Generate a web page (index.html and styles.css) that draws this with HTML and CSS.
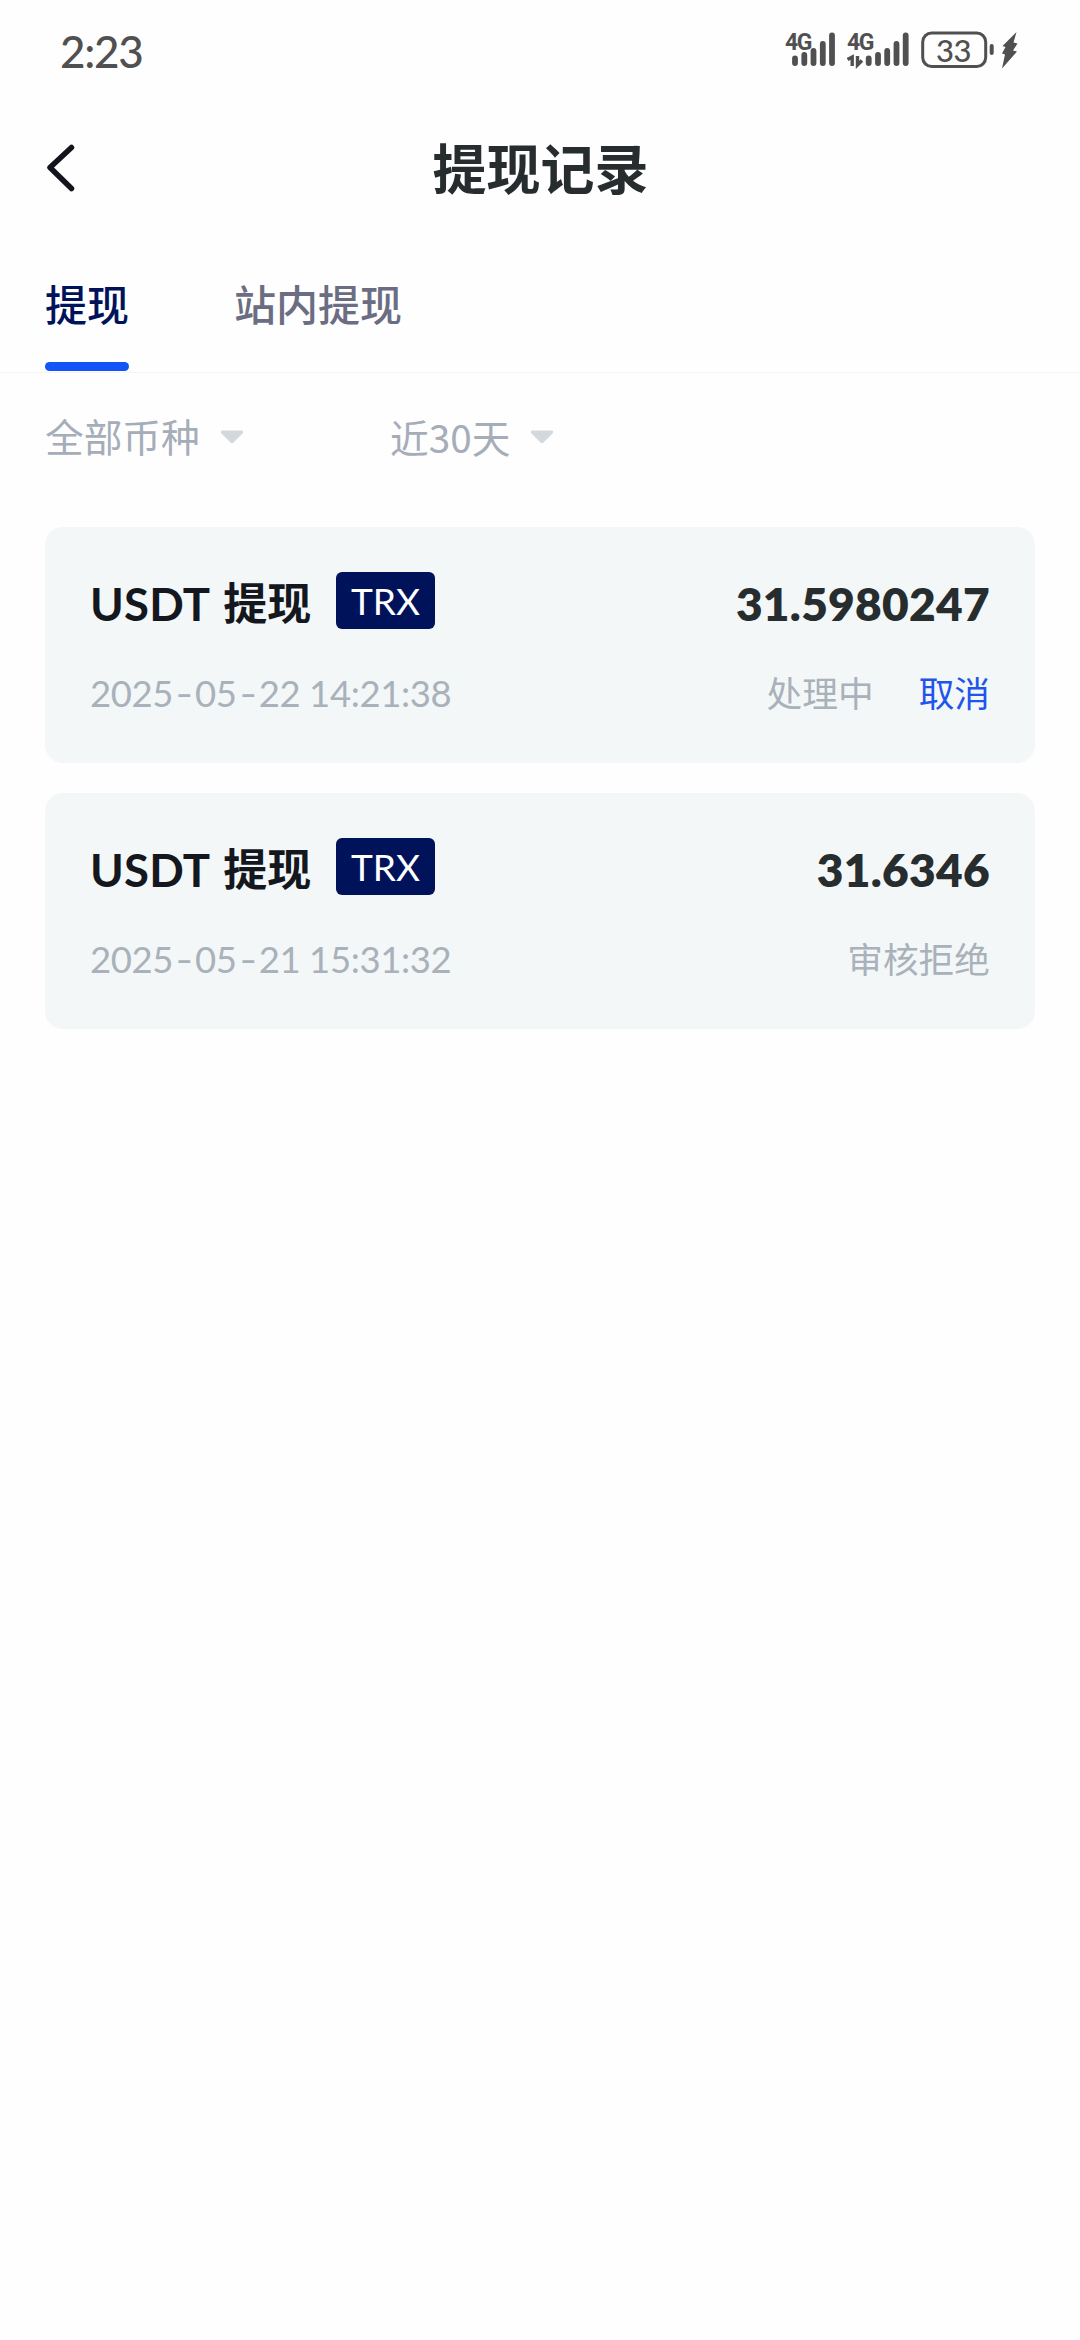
FILE: index.html
```html
<!DOCTYPE html>
<html lang="zh-CN">
<head>
<meta charset="utf-8">
<title>提现记录</title>
<link rel="stylesheet" href="styles.css">
</head>
<body>
<div class="status-bar">
  <span class="clock">2:23</span>
  <svg class="status-icons" width="240" height="44" viewBox="0 0 240 44">
    <g class="signal">
      <text class="network" x="1" y="21">4G</text>
      <path d="M11 29.5V34M20.3 26V34M29.5 22V34M38.8 15V34M48 6.500V34"/>
    </g>
    <g class="signal">
      <text class="network" x="63" y="21">4G</text>
      <path d="M84.700 29.500V34M94 26V34M103.200 22V34M112.500 15V34M121.700 6.500V34"/>
      <path class="arrows" d="M63.500 30.500L68.200 28V37M73.500 27V36L78 31.500"/>
    </g>
    <rect class="battery" x="138.700" y="4" width="63" height="33.500" rx="9"/>
    <text class="level" x="169.500" y="32.500" text-anchor="middle">33</text>
    <rect class="solid" x="205.700" y="15" width="4" height="11" rx="2"/>
    <path class="solid" d="M232.500 3L218.500 17L221.500 18L218 24.500L221 25.500L218 39.500L233 22.500L229 21.500L233.500 14.500L229.500 13.500Z"/>
  </svg>
</div>
<header class="header">
  <svg class="back" width="30" height="50" viewBox="0 0 30 50"><path d="M26.500 4.500L5 24.500L26.500 45.500"/></svg>
  <h1 class="title">提现记录</h1>
</header>
<nav class="tabs">
  <a class="tab tab-active">提现</a>
  <a class="tab">站内提现</a>
</nav>
<div class="filters">
  <div class="filter filter-coin"><span>全部币种</span>
    <svg class="caret" width="26" height="16" viewBox="0 0 26 16"><path d="M3 1.500H23Q25 2.500 23.500 4.500L14.500 13.500Q13 15 11.500 13.500L2.500 4.500Q1 2.500 3 1.500Z"/></svg></div>
  <div class="filter"><span>近<span class="days">30</span>天</span>
    <svg class="caret" width="26" height="16" viewBox="0 0 26 16"><path d="M3 1.500H23Q25 2.500 23.500 4.500L14.500 13.500Q13 15 11.500 13.500L2.500 4.500Q1 2.500 3 1.500Z"/></svg></div>
</div>
<main class="records">
  <article class="card">
    <div class="row row-main">
      <span class="name"><span class="coin">USDT</span><span>提现</span></span>
      <span class="chain">TRX</span>
      <span class="amount">31.5980247</span>
    </div>
    <div class="row row-meta">
      <time class="date">2025<span class="dash">-</span>05<span class="dash">-</span>22 14:21:38</time>
      <span class="state">处理中</span>
      <a class="cancel">取消</a>
    </div>
  </article>
  <article class="card">
    <div class="row row-main">
      <span class="name"><span class="coin">USDT</span><span>提现</span></span>
      <span class="chain">TRX</span>
      <span class="amount">31.6346</span>
    </div>
    <div class="row row-meta">
      <time class="date">2025<span class="dash">-</span>05<span class="dash">-</span>21 15:31:32</time>
      <span class="state">审核拒绝</span>
    </div>
  </article>
</main>
</body>
</html>
```

FILE: styles.css
```css
* { box-sizing: border-box; }
body {
  margin: 0;
  min-height: 2340px;
  background: #fefefe;
  color: #272d2e;
  font-family: Lato, "Noto Sans CJK SC", sans-serif;
}
.status-bar {
  display: flex;
  justify-content: space-between;
  height: 102px;
  padding: 29px 56px 0 60px;
  color: #505050;
}
.clock { font-size: 44px; line-height: 44px; font-weight: 500; letter-spacing: -1.3px; }
.status-icons { display: block; overflow: visible; fill: #505050; }
.signal path { fill: none; stroke: #505050; stroke-width: 5.8; stroke-linecap: round; }
.signal .arrows { stroke-width: 3.4; stroke-linecap: butt; }
.network { font-family: Roboto, sans-serif; font-size: 23px; font-weight: 700; letter-spacing: -1.5px; }
.battery { fill: none; stroke: #505050; stroke-width: 3; }
.level { font-size: 31px; font-weight: 500; letter-spacing: -0.5px; }
.header {
  display: grid;
  grid-template-columns: 45px 1fr 75px;
  align-items: center;
  height: 132px;
  padding: 0 15px 0 45px;
}
.back { display: block; fill: none; stroke: #14151c; stroke-width: 5.5; stroke-linecap: round; stroke-linejoin: round; }
.title {
  margin: 0;
  padding: 0 0 3px 1px;
  text-align: center;
  font: 700 54px/80px "Noto Sans CJK SC", sans-serif;
}
.tabs {
  display: flex;
  gap: 105px;
  height: 139px;
  padding: 0 45px;
  border-bottom: 1px solid #f3f4f6;
}
.tab {
  display: flex;
  flex-direction: column;
  justify-content: space-between;
  height: 137px;
  padding-top: 38px;
  color: #6b6d83;
  font: 500 42px/62px "Noto Sans CJK SC", sans-serif;
}
.tab-active { color: #00135a; }
.tab-active::after { content: ""; height: 9px; border-radius: 5px; background: #1254f5; }
.filters {
  display: flex;
  height: 154px;
  padding: 35px 45px 0;
  color: #a5adb8;
  font-size: 38.7px;
  line-height: 58px;
}
.filter { display: flex; gap: 19px; height: 58px; align-items: center; }
.filter-coin { width: 345px; }
.days { font-family: "Noto Sans CJK SC", sans-serif; }
.caret { display: block; fill: #d3d8dd; }
.records { display: flex; flex-direction: column; gap: 30px; padding: 0 45px; }
.card { height: 236px; padding: 45px 45px 0; border-radius: 18px; background: #f3f7f8; }
.row { display: flex; align-items: center; }
.row-main { height: 57px; }
.row-meta { height: 60px; margin-top: 32px; color: #a9b1ba; font-size: 35.7px; }
.name { display: flex; gap: 13px; width: 246px; padding-top: 6px; color: #14171d; font-size: 44px; line-height: 57px; font-weight: 700; white-space: nowrap; }
.coin { font-size: 45.5px; letter-spacing: 0.2px; }
.chain {
  width: 99px;
  height: 57px;
  border-radius: 6px;
  background: #00135a;
  color: #fff;
  text-align: center;
  font-size: 37px;
  line-height: 57px;
}
.amount { margin-left: auto; padding-top: 5px; font-size: 46px; font-weight: 800; letter-spacing: 0.3px; }
.date { padding-top: 4px; font-size: 36.5px; letter-spacing: -0.4px; white-space: pre; }
.dash { display: inline-block; width: 16px; margin: 0 3px; text-align: center; transform: scaleX(1.3); }
.state { margin-left: auto; }
.cancel { margin-left: 45px; color: #1e55ea; }
```
